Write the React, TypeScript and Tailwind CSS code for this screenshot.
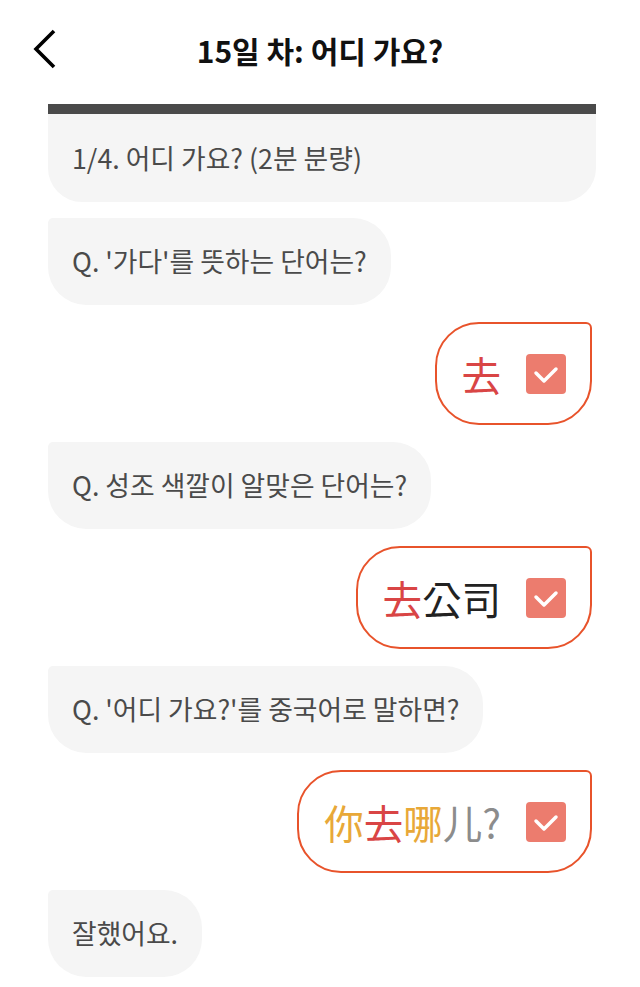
import React from "react";

const font = { fontFamily: '"Noto Sans CJK KR", "Noto Sans", sans-serif' };

function Check() {
  return (
    <div className="w-[40px] h-[40px] rounded-[4px] bg-[#ec7c6e] flex items-center justify-center shrink-0">
      <svg width="40" height="40" viewBox="0 0 40 40">
        <path d="M10 19 L18 27 L30 15" fill="none" stroke="#fff" strokeWidth="3.5" strokeLinecap="round" strokeLinejoin="round" />
      </svg>
    </div>
  );
}

function Left({ children }: { children: React.ReactNode }) {
  return (
    <div className="self-start h-[87px] flex items-center px-[24px] bg-[#f5f5f5] rounded-[38px] rounded-tl-[5px] text-[26.8px] text-[#4a4a4a]">
      {children}
    </div>
  );
}

function Right({ children }: { children: React.ReactNode }) {
  return (
    <div className="self-end h-[103px] flex items-center gap-[25px] pl-[25px] pr-[24px] border-2 border-[#e8532b] rounded-[44px] rounded-tr-[6px] bg-white">
      <span className="text-[39.5px] leading-none">{children}</span>
      <Check />
    </div>
  );
}

export default function App() {
  return (
    <div className="w-[640px] min-h-[987px] bg-white" style={font}>
      <div className="h-[104px] grid grid-cols-[1fr_auto_1fr] items-center">
        <div className="pl-[33px] pb-[6px]">
          <svg width="24" height="40" viewBox="0 0 24 40">
            <path d="M21 2 L3 20 L21 38" fill="none" stroke="#000" strokeWidth="3.6" />
          </svg>
        </div>
        <div className="text-[30px] font-bold text-[#111] pb-[4px]">15일 차: 어디 가요?</div>
        <div />
      </div>
      <div className="pl-[48px] pr-[44px]">
        <div className="h-[10px] bg-[#4a4a4a]" />
        <div className="h-[88px] flex items-center px-[24px] bg-[#f5f5f5] rounded-b-[34px] text-[26.8px] text-[#4a4a4a]">
          1/4. 어디 가요? (2분 분량)
        </div>
        <div className="flex flex-col gap-[17px] mt-[16px] pr-[4px]">
          <Left>Q. '가다'를 뜻하는 단어는?</Left>
          <Right>
            <span className="text-[#d94545]">去</span>
          </Right>
          <Left>Q. 성조 색깔이 알맞은 단어는?</Left>
          <Right>
            <span className="text-[#d94545]">去</span>
            <span className="text-[#222]">公司</span>
          </Right>
          <Left>Q. '어디 가요?'를 중국어로 말하면?</Left>
          <Right>
            <span className="text-[#e8a838]">你</span>
            <span className="text-[#d94545]">去</span>
            <span className="text-[#e8a838]">哪</span>
            <span className="text-[#8c8c8c]">儿?</span>
          </Right>
          <Left>잘했어요.</Left>
        </div>
      </div>
    </div>
  );
}
